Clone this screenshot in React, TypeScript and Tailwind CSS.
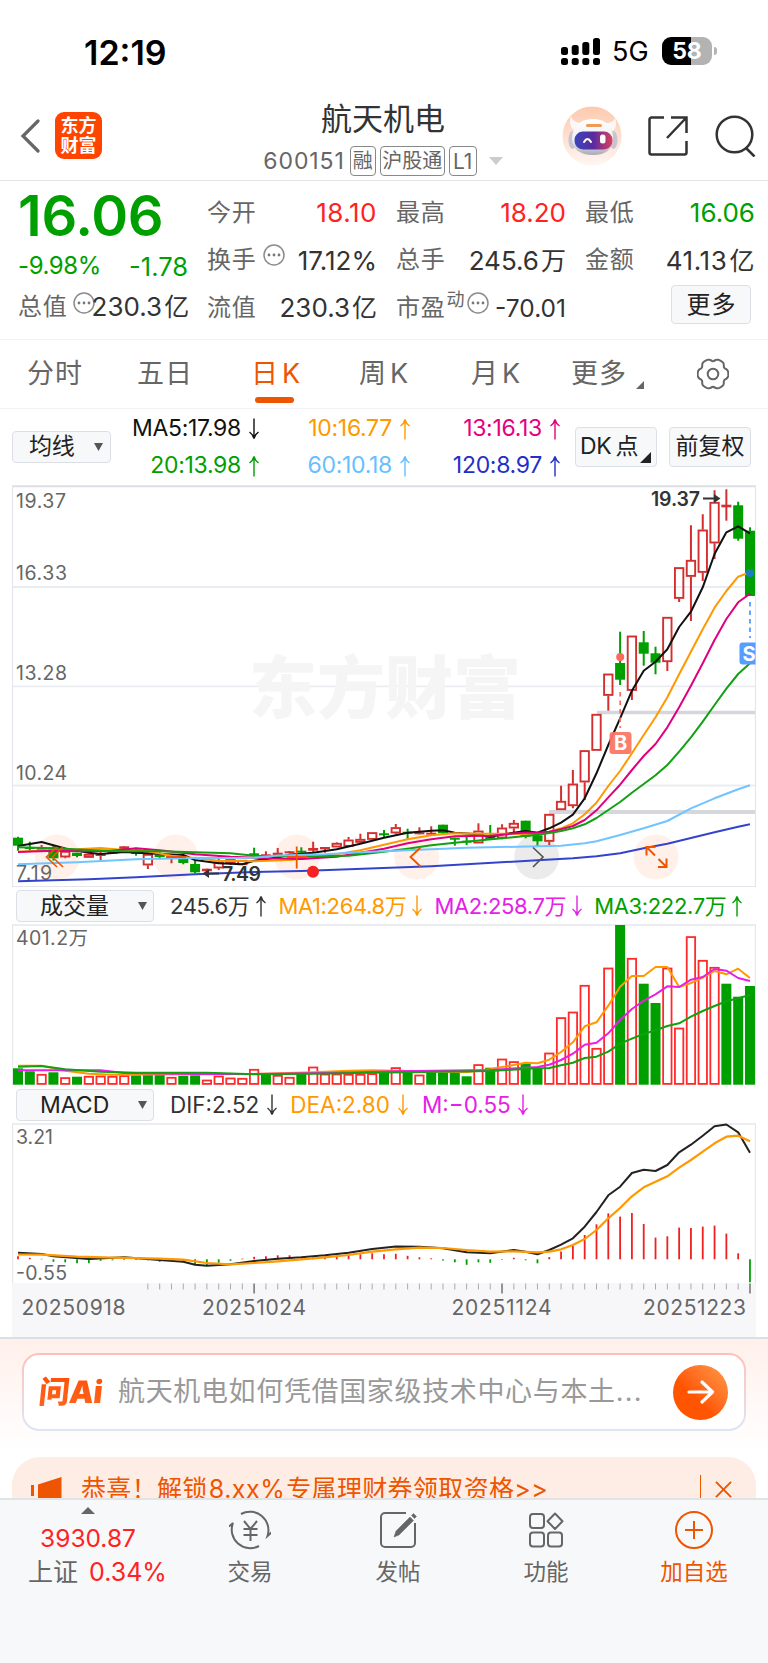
import type { ReactNode } from "react";
import { clsx } from "clsx";

/* ------------------------------------------------------------------ */
/* Chart data: pixel rows inside the 744px wide chart canvas           */
/* ------------------------------------------------------------------ */

type Color = "r" | "g";
type Candle = [Color, number, number, number, number];
type Point = [number, number];

const RED = "#d32f2f";
const GREEN = "#009f00";

const xAt = (i: number) => 18 + i * 11.806;

// [colour, high, body top, body bottom, low]
const CANDLES: Candle[] = [
    ["g", 836.7, 837.7, 845.7, 850.7],
    ["g", 841.7, 847, 849, 850.7],
    ["r", 845, 847.7, 849.3, 849.3],
    ["g", 846, 847.3, 858.3, 860.7],
    ["r", 850.7, 851, 857.3, 858.3],
    ["g", 852.7, 852.7, 856, 857.3],
    ["r", 854, 854, 857.7, 857.7],
    ["r", 851.7, 854, 856, 860],
    ["r", 851.7, 851.7, 853.3, 853.3],
    ["r", 846.3, 846.3, 849.3, 849.3],
    ["g", 847.7, 849.3, 854, 855.7],
    ["r", 852.3, 854, 865.3, 869],
    ["g", 850, 855, 857, 859.3],
    ["r", 856, 856, 858.7, 863.3],
    ["g", 858.3, 858.7, 863, 864.3],
    ["g", 860, 864, 872.3, 873.3],
    ["r", 868.7, 868.7, 871.3, 873.3],
    ["r", 855, 861.7, 868.3, 870],
    ["r", 859.3, 859.3, 863.3, 865],
    ["r", 860, 860, 865, 865],
    ["g", 847.7, 853.3, 855.3, 855.3],
    ["r", 851.3, 854.3, 856, 856],
    ["r", 848, 852.7, 856, 856],
    ["r", 851, 851.3, 853.3, 853.3],
    ["g", 847.3, 850.7, 852.7, 852.7],
    ["r", 841.7, 848, 850.7, 853.3],
    ["r", 847, 847, 849.3, 852.7],
    ["r", 842.3, 843, 847.3, 847.3],
    ["r", 837, 839.7, 846.7, 846.7],
    ["r", 833.7, 839, 842.7, 842.7],
    ["r", 832.3, 832.3, 839.7, 839.7],
    ["g", 830, 833.3, 835, 837.7],
    ["r", 824, 827.3, 833.3, 834.3],
    ["g", 828.7, 831.7, 833.3, 838.7],
    ["r", 827.3, 832.3, 834.3, 834.3],
    ["r", 826.3, 832.7, 834.3, 835.3],
    ["g", 824.7, 824.7, 833.3, 834.3],
    ["g", 837.7, 837.7, 839.3, 845.7],
    ["g", 837, 840.7, 842.3, 845],
    ["r", 823.3, 830.7, 843.3, 843.3],
    ["g", 825, 836.3, 839, 840],
    ["r", 824.3, 827.7, 838.3, 839.3],
    ["r", 820, 823, 828.3, 832],
    ["g", 820.7, 820.7, 836.7, 838.3],
    ["g", 832.7, 835.3, 841.3, 846],
    ["r", 814, 814, 841.7, 845],
    ["r", 785.7, 801, 810, 810],
    ["r", 770, 783.7, 806, 808.3],
    ["r", 750.3, 750.3, 782.3, 800],
    ["r", 714, 714, 750.7, 750.7],
    ["r", 673.7, 673.7, 695.7, 710.7],
    ["g", 631.7, 663, 679.7, 685],
    ["r", 635.7, 635.7, 690.7, 700],
    ["g", 631, 642.3, 653.7, 665.7],
    ["g", 646.7, 653.3, 662.7, 674.3],
    ["r", 617, 617, 662, 671],
    ["r", 567.3, 567.3, 598.7, 602],
    ["r", 525.3, 560, 576.7, 621],
    ["r", 514.3, 529.7, 572.7, 581],
    ["r", 490.3, 502, 543.3, 559],
    ["r", 489.3, 504.7, 507.3, 520.7],
    ["g", 501.7, 505.3, 538.7, 540.7],
    ["g", 527.3, 530.7, 596, 596],
];

const MA5: Point[] = [[0, 846], [2, 842], [4, 848.5], [6, 852.7], [7, 854], [9, 852], [12, 854], [14, 855], [15, 860], [17, 863.3], [19, 864.3], [20, 860.7], [22, 857.5], [23, 854.7], [25, 852.7], [27, 849.3], [29, 843.7], [31, 837.7], [33, 832.7], [35, 830.7], [36, 830.3], [37, 832.7], [39, 834.3], [40, 836.7], [41, 834.5], [43, 831], [44, 832.7], [45, 828.3], [46, 822.7], [47, 814.7], [48, 798.3], [49, 773.3], [50, 745], [51, 718.3], [52, 690.7], [53, 670.7], [54, 661.7], [55, 649.3], [56, 627], [57, 611.7], [58, 587.3], [59, 554], [60, 532.3], [61, 526.3], [62, 533.3]];
const MA10: Point[] = [[0, 851.7], [3, 850], [5, 849.3], [7, 848], [9, 850], [11, 851.3], [13, 855.7], [15, 858.3], [17, 860.7], [20, 861.3], [23, 860], [25, 857.7], [27, 854.3], [29, 850.3], [31, 844.7], [33, 839.3], [35, 835.3], [37, 833.3], [39, 833.7], [44, 834], [45, 831.7], [46, 828.3], [47, 823.3], [48, 814.3], [49, 802.7], [50, 786], [51, 771], [52, 753.3], [53, 735], [54, 717.3], [55, 697.3], [56, 674.3], [57, 651.7], [58, 629.3], [59, 607.7], [60, 591], [61, 576.7], [62, 572.3]];
const MA13: Point[] = [[0, 852], [3, 850.7], [6, 851.3], [8, 850.7], [10, 848.3], [12, 850.3], [15, 854.3], [18, 856.7], [21, 858.3], [24, 859], [27, 856.7], [29, 852.7], [31, 848.7], [33, 843.3], [35, 839.3], [37, 836.3], [40, 835.7], [43, 832.5], [44, 832.7], [45, 831.7], [46, 829.3], [47, 826], [48, 820], [49, 810.3], [50, 797.3], [51, 784.7], [52, 770], [53, 756], [54, 744], [55, 727.3], [56, 707.3], [57, 685.7], [58, 663.3], [59, 640], [60, 619], [61, 602.3], [62, 593.7]];
const MA20: Point[] = [[0, 847.3], [3, 848.3], [6, 850], [9, 851.3], [12, 851.3], [15, 852.3], [18, 853.3], [20, 855.7], [23, 856.2], [25, 856.3], [28, 855.7], [31, 851.7], [33, 848.7], [35, 845.3], [37, 842.7], [39, 840.5], [41, 838.3], [44, 834.7], [45, 833], [46, 831], [47, 828.3], [48, 824.3], [49, 818], [50, 810], [51, 802], [52, 792.7], [53, 784], [54, 775.3], [55, 765], [56, 751.7], [57, 737.3], [58, 721.7], [59, 705], [60, 688.7], [61, 674], [62, 663.3]];
const MA60: Point[] = [[0, 864.3], [5, 862.3], [10, 859.3], [15, 858], [20, 857.7], [22, 855.5], [26, 854.3], [29, 852.3], [32, 850.7], [38, 847.7], [44, 846.3], [46, 845.7], [48, 843.3], [49, 841.3], [51, 835], [53, 828.3], [55, 821], [57, 808.3], [59, 798.3], [61, 789.3], [62, 785.3]];
const MA120: Point[] = [[0, 881.3], [6, 879.3], [10, 877.3], [15, 874.3], [20, 872], [24, 871], [35, 866.3], [44, 860.3], [47, 858.3], [49, 856.3], [51, 853.3], [53, 848.3], [55, 843.7], [57, 838], [59, 832.3], [61, 826.7], [62, 824.3]];

const VOLUMES: [Color, number][] = [
    ["g", 1068.3], ["g", 1071.3], ["r", 1074], ["g", 1072.3], ["r", 1077.3], ["g", 1076.7], ["r", 1076],
    ["r", 1075.7], ["r", 1076], ["r", 1075.3], ["g", 1075.3], ["g", 1074.7], ["g", 1074.3], ["r", 1077],
    ["g", 1075.7], ["g", 1075.3], ["r", 1079.7], ["r", 1075.7], ["r", 1077.7], ["r", 1078], ["r", 1069],
    ["g", 1074.3], ["r", 1075], ["r", 1077], ["g", 1074], ["r", 1066.7], ["r", 1073.7], ["r", 1073.7],
    ["r", 1074], ["r", 1074], ["r", 1073.3], ["g", 1073], ["r", 1067.3], ["g", 1073], ["r", 1074.7],
    ["g", 1072.3], ["g", 1072.7], ["g", 1072.7], ["g", 1076.3], ["r", 1064.3], ["g", 1067.7], ["r", 1058.7],
    ["r", 1061.3], ["g", 1063.7], ["g", 1068.3], ["r", 1052.7], ["r", 1017.3], ["r", 1011.7], ["r", 985],
    ["r", 1048], ["r", 967.7], ["g", 925], ["r", 958], ["g", 983.7], ["g", 1003], ["r", 967.7],
    ["r", 1027.7], ["r", 936.3], ["r", 960], ["r", 967], ["g", 983.7], ["g", 996.7], ["g", 986],
];

const VMA1: Point[] = [[0, 1065.7], [2, 1065.7], [4, 1070.7], [6, 1073.7], [8, 1074.7], [14, 1074.3], [20, 1074], [25, 1072.3], [28, 1070.7], [30, 1070.3], [33, 1071], [38, 1072.3], [40, 1069.3], [41, 1067], [42, 1065], [43, 1062.7], [44, 1063.3], [45, 1059.7], [46, 1052], [47, 1042.3], [48, 1026.3], [49, 1022.3], [50, 1005.7], [51, 986.7], [52, 976], [53, 976], [54, 967], [55, 967], [56, 987], [57, 983], [58, 977.7], [59, 971], [60, 974.3], [61, 968.7], [62, 978]];
const VMA2: Point[] = [[0, 1070.3], [7, 1070.3], [9, 1073], [15, 1074], [20, 1074], [26, 1073], [32, 1071.3], [40, 1070], [43, 1067.7], [44, 1067], [45, 1064.7], [46, 1060], [47, 1053.7], [48, 1044.7], [49, 1042.7], [50, 1033.3], [51, 1020], [52, 1009], [53, 1000.7], [54, 994.3], [55, 986.3], [56, 987], [57, 979.7], [58, 977], [59, 969], [60, 970.7], [61, 978], [62, 981]];
const VMA3: Point[] = [[0, 1066.7], [2, 1066], [4, 1069.3], [7, 1071.7], [10, 1072.7], [16, 1072.7], [20, 1074.3], [25, 1073.7], [30, 1072.7], [40, 1071], [44, 1068.3], [45, 1068], [46, 1065.3], [47, 1062.7], [48, 1058], [49, 1056.7], [50, 1051.7], [51, 1043.7], [52, 1038.7], [53, 1034], [54, 1030.3], [55, 1026], [56, 1023.3], [57, 1016.7], [58, 1011], [59, 1006], [60, 1001.3], [61, 998.3], [62, 995]];

// MACD bar ends, measured from the zero line (positive is up)
const BARS = [3, 1.5, 0.5, -2.5, -3, -4, -4, -1.5, -1, -0.8, -0.8, -1, -2.5, -2, -3, -5, -6.5, -3.5, -1.5, 0.7, 2.5, 3, 4, 4, 2.5, 3, 3, 3.5, 4, 5, 6, 5, 5.5, 3.5, 2, 1, -1.2, -3, -5.5, -3, -3.5, -0.5, 1.5, -1, -4, 2.3, 7.7, 13.3, 24.3, 35, 46, 42.7, 46.3, 35.3, 21.7, 23, 31.7, 31.3, 32.7, 33.7, 25.7, 6, -23];

const DIF: Point[] = [[0, 1252.7], [2, 1254], [3, 1256.3], [6, 1259], [9, 1257.3], [12, 1260], [14, 1261.7], [15, 1264.7], [16, 1265.7], [18, 1264.3], [20, 1261], [22, 1258.7], [24, 1257.3], [26, 1255.3], [28, 1252.7], [30, 1249], [32, 1246.5], [34, 1246.7], [36, 1248.3], [38, 1252.3], [40, 1253.3], [42, 1250], [43, 1251.7], [44, 1254.3], [45, 1250], [46, 1244.7], [47, 1238.3], [48, 1226.7], [49, 1212], [50, 1195.3], [51, 1186.7], [52, 1173], [53, 1169.7], [54, 1171], [55, 1165], [56, 1152.3], [57, 1144.7], [58, 1135.7], [59, 1126.3], [60, 1124.5], [61, 1132.3], [62, 1152.7]];
const DEA: Point[] = [[0, 1254.5], [2, 1254.7], [5, 1256.7], [8, 1257.7], [12, 1258.7], [14, 1259.7], [16, 1263], [18, 1264.3], [20, 1263], [22, 1261.3], [24, 1259.3], [26, 1257.3], [28, 1255], [30, 1251.7], [32, 1249.3], [34, 1247.7], [36, 1248], [38, 1250], [40, 1251.7], [42, 1251.3], [44, 1252.3], [45, 1251.7], [46, 1249.3], [47, 1245], [48, 1239], [49, 1230], [50, 1218.3], [51, 1208], [52, 1196.3], [53, 1187.3], [54, 1181.7], [55, 1176.3], [56, 1167.7], [57, 1160], [58, 1151.7], [59, 1143.3], [60, 1136.7], [61, 1135.7], [62, 1141.3]];

/* ------------------------------------------------------------------ */
/* Small pieces                                                        */
/* ------------------------------------------------------------------ */

function Line({ points, color, width = 2 }: { points: Point[]; color: string; width?: number }) {
    return (
        <polyline
            points={points.map(([i, y]) => `${xAt(i)},${y}`).join(" ")}
            fill="none"
            stroke={color}
            strokeWidth={width}
            strokeLinejoin="round"
        />
    );
}

function AxisText({ x, y, w, children }: { x: number; y: number; w: number; children: string }) {
    return (
        <text x={x} y={y} textLength={w} fontSize="19.5" fill="#666">
            {children}
        </text>
    );
}

function Arrow({ down }: { down?: boolean }) {
    return (
        <svg
            viewBox="0 0 12 22"
            className={clsx("h-[22px] w-3 shrink-0", down && "rotate-180")}
            fill="none"
            stroke="currentColor"
            strokeWidth="1.4"
        >
            <path d="M6 21.5V1.5M1.5 8Q5 5.500 6 1.500Q7 5.500 10.500 8" />
        </svg>
    );
}

function Ma({ color, down, children, className }: { color: string; down?: boolean; children: ReactNode; className?: string }) {
    return (
        <div className={clsx("flex items-center", color, className)}>
            <span className="whitespace-nowrap">{children}</span>
            <Arrow down={down} />
        </div>
    );
}

function Dots() {
    return (
        <svg viewBox="0 0 22 22" className="size-[22px] shrink-0" fill="none" stroke="#8c8c8c" strokeWidth="1.5">
            <circle cx="11" cy="11" r="10" />
            <g fill="#777" stroke="none">
                <circle cx="6" cy="11" r="1.400" />
                <circle cx="11" cy="11" r="1.400" />
                <circle cx="16" cy="11" r="1.400" />
            </g>
        </svg>
    );
}

function Select({ children, className }: { children: ReactNode; className: string }) {
    return (
        <div className={clsx("flex items-center justify-between rounded-[4px] border border-[#dcdfe6] bg-[#f7f8fa] text-[#222]", className)}>
            <span className="whitespace-nowrap">{children}</span>
            <svg viewBox="0 0 9 8" className="h-2 w-[9px]" fill="#555">
                <path d="M0 0h9L4.500 8z" />
            </svg>
        </div>
    );
}

function Cell({
    label,
    value,
    unit,
    extra,
    color = "text-[#333]",
    size = "text-[26px]",
}: {
    label: string;
    value?: string;
    unit?: string;
    extra?: ReactNode;
    color?: string;
    size?: string;
}) {
    return (
        <div className="flex h-[47.500px] items-center justify-between">
            <div className="flex items-center text-[24px] tracking-[0.800px] whitespace-nowrap text-[#666]">
                {label}
                {extra}
            </div>
            <span className={clsx("whitespace-nowrap", color, size)}>
                {value}
                {unit && <span className="ml-[2px] text-[25px]">{unit}</span>}
            </span>
        </div>
    );
}

// six broad lobes with narrow notches between them
const gearPath =
    Array.from({ length: 96 }, (_, k) => {
        const a = (k * Math.PI) / 48;
        const r = 15.300 - 2.500 * Math.pow((1 - Math.cos(6 * a)) / 2, 2.500);
        return `${k ? "L" : "M"}${(16 + r * Math.cos(a)).toFixed(2)} ${(16 + r * Math.sin(a)).toFixed(2)}`;
    }).join("") + "Z";

/* ------------------------------------------------------------------ */
/* Top                                                                 */
/* ------------------------------------------------------------------ */

function StatusBar() {
    return (
        <div className="flex h-[102px] items-center justify-between pr-[51px] pl-[84px] text-black">
            <span className="pt-[2px] text-[34px] font-semibold">12:19</span>
            <div className="flex items-center">
                <svg viewBox="0 0 39 27" className="h-[27px] w-[39px]">
                    <rect x="0" y="9" width="7" height="8" rx="2.500" />
                    <rect x="10.700" y="7" width="7" height="10" rx="2.500" />
                    <rect x="21.300" y="4" width="7" height="13" rx="2.500" />
                    <rect x="32" y="0" width="7" height="17" rx="2.500" />
                    <rect x="0" y="20" width="7" height="7" rx="2.500" />
                    <rect x="10.700" y="20" width="7" height="7" rx="2.500" />
                    <rect x="21.300" y="20" width="7" height="7" rx="2.500" />
                    <rect x="32" y="20" width="7" height="7" rx="2.500" />
                </svg>
                <span className="ml-3 w-[38px] pt-[2px] text-[27px]">5G</span>
                <div className="ml-3 flex h-7 w-[50px] items-center justify-center rounded-[9px] bg-linear-to-r from-black from-58% to-[#b3b3b3] to-58% text-[23px] font-bold text-white">
                    58
                </div>
                <div className="ml-0.5 h-2 w-[3px] rounded-r-full bg-[#b3b3b3]" />
            </div>
        </div>
    );
}

function Robot() {
    return (
        <svg viewBox="0 0 60 60" className="size-[60px]">
            <defs>
                <linearGradient id="robotBg" x1="0" y1="0" x2="0" y2="1">
                    <stop offset="0" stopColor="#fdc9ae" />
                    <stop offset="1" stopColor="#fff6f1" />
                </linearGradient>
                <linearGradient id="visor" x1="0" y1="0" x2="1" y2="0">
                    <stop offset="0" stopColor="#3b45b8" />
                    <stop offset="0.500" stopColor="#5a2aa0" />
                    <stop offset="1" stopColor="#e0405c" />
                </linearGradient>
                <linearGradient id="shell" x1="0" y1="0" x2="0" y2="1">
                    <stop offset="0" stopColor="#ffffff" />
                    <stop offset="0.600" stopColor="#efedf2" />
                    <stop offset="1" stopColor="#a9a9b8" />
                </linearGradient>
            </defs>
            <circle cx="30" cy="30" r="29.500" fill="url(#robotBg)" />
            <path d="M9 10c-2 6-1 11 3 14l7-7c-5 0-9-3-10-7zM53 12c2 5 1 10-2 13l-7-8c5 0 8-2 9-5z" fill="#fbf8f8" />
            <ellipse cx="10.500" cy="34" rx="4" ry="9" fill="#c6c4d0" />
            <ellipse cx="51.500" cy="34" rx="4" ry="9" fill="#c6c4d0" />
            <path d="M31 13c14 0 20 9 20 19 0 11-7 17-20 17S10 43 10 32c0-10 7-19 21-19z" fill="url(#shell)" />
            <rect x="24" y="18" width="16" height="3" rx="1.500" fill="#ef9a55" />
            <rect x="12.500" y="25.500" width="38" height="18" rx="8.500" fill="url(#visor)" />
            <path d="M22 36q3.500-6 7 0" fill="none" stroke="#fff" strokeWidth="2" strokeLinecap="round" />
            <rect x="38" y="28.500" width="5.500" height="9" rx="2.500" fill="#fff" />
        </svg>
    );
}

function Header() {
    return (
        <header className="grid h-[79px] grid-cols-[1fr_auto_1fr] items-start border-b border-[#e4e4e6]">
            <div className="flex items-center pt-[10px] pl-5">
                <svg viewBox="0 0 20 34" className="h-[34px] w-5" fill="none" stroke="#666" strokeWidth="3.200" strokeLinecap="round">
                    <path d="M18 2L3 17l15 15" />
                </svg>
                <div className="ml-[15px] flex size-[47px] flex-col items-center justify-center rounded-[9px] bg-[#ff4400] text-[18px] leading-[20px] font-bold text-white">
                    <span>东方</span>
                    <span>财富</span>
                </div>
            </div>
            <div className="-ml-[2px] flex flex-col items-center">
                <h1 className="mt-[-1px] h-9 text-[31px] leading-9 text-[#333]">航天机电</h1>
                <div className="mt-[9px] flex h-[30px] items-center text-[22px] leading-none text-[#666]">
                    <span className="mr-[5px] text-[23px] tracking-[0.900px]">600151</span>
                    <span className="mr-1 flex h-[30px] w-[26px] items-center justify-center rounded-[4px] border border-[#888] text-[20px]">融</span>
                    <span className="mr-1 flex h-[30px] w-[65px] items-center justify-center rounded-[4px] border border-[#888] text-[20px]">沪股通</span>
                    <span className="flex h-[30px] w-7 items-center justify-center rounded-[4px] border border-[#888] text-[21px]">L1</span>
                    <svg viewBox="0 0 14 8" className="ml-[12px] h-2 w-3.5" fill="#ccc">
                        <path d="M0 0h14L7 8z" />
                    </svg>
                </div>
            </div>
            <div className="flex items-center justify-end pt-[4px] pr-[11px]">
                <Robot />
                <svg viewBox="0 0 40 40" className="ml-[26px] size-10" fill="none" stroke="#333" strokeWidth="2.500">
                    <path d="M16 1.500H3.500a2 2 0 0 0-2 2v33a2 2 0 0 0 2 2h33a2 2 0 0 0 2-2V25M23 1.500h15.500V17M38.500 1.500L19 22" />
                </svg>
                <svg viewBox="0 0 42 42" className="ml-[27px] size-[42px]" fill="none" stroke="#333" strokeWidth="2.500">
                    <circle cx="19.500" cy="19.500" r="17.800" />
                    <path d="M31 33l8.500 8.500" />
                </svg>
            </div>
        </header>
    );
}

function Quote() {
    return (
        <section className="grid h-[159px] grid-cols-4 gap-x-[19px] border-b border-[#f2f2f4] pt-[8px] pr-[13px] pl-[18px]">
            <div className="flex flex-col text-[#009f00]">
                <div className="mt-[2px] h-[50px] text-[56px] leading-[50px] font-semibold tracking-[-0.300px]">16.06</div>
                <div className="mt-[5px] flex h-[40px] items-center justify-between text-[24px]">
                    <span className="tracking-[-0.400px]">-9.98%</span>
                    <span className="pt-[2px] text-[25.500px]">-1.78</span>
                </div>
                <div className="flex h-[41px] items-center text-[24px] whitespace-nowrap text-[#666]">
                    <span className="tracking-[0.800px]">总值</span>
                    <span className="-mt-[8px] ml-[5px]">
                        <Dots />
                    </span>
                    <span className="-ml-[3px] text-[26px] text-[#333]">
                        230.3<span className="ml-[2px] text-[25px]">亿</span>
                    </span>
                </div>
            </div>
            <div>
                <Cell label="今开" value="18.10" color="text-[#ff2222] tracking-[0.500px]" />
                <Cell label="换手" value="17.12%" extra={<span className="-mt-[10px] ml-[6px]"><Dots /></span>} />
                <Cell label="流值" value="230.3" unit="亿" />
            </div>
            <div>
                <Cell label="最高" value="18.20" color="text-[#ff2222]" />
                <Cell label="总手" value="245.6" unit="万" />
                <Cell
                    label="市盈"
                    value="-70.01"
                    size="text-[24.500px] pt-[2px]"
                    extra={
                        <span className="-mt-[10px] flex items-center gap-[2px]">
                            <span className="-mt-[6px] ml-px text-[18px] tracking-normal">动</span>
                            <Dots />
                        </span>
                    }
                />
            </div>
            <div>
                <Cell label="最低" value="16.06" color="text-[#009f00]" />
                <Cell label="金额" value="41.13" unit="亿" color="text-[#333] tracking-[0.600px]" />
                <div className="mt-[1px] mr-[4px] ml-auto flex h-[39px] w-20 items-center justify-center rounded-[4px] border border-[#dcdfe6] bg-[#f7f8fa] pl-px text-[24px] tracking-[1px] text-[#222]">
                    更多
                </div>
            </div>
        </section>
    );
}

function Tabs() {
    const tab = "flex h-full items-center pt-px text-[27px] tracking-[1px] text-[#666] whitespace-nowrap";
    return (
        <nav className="flex h-[69px] items-center border-b border-[#f2f2f4] pl-[27px]">
            <div className={clsx(tab, "w-[110px]")}>分时</div>
            <div className={clsx(tab, "w-[114px]")}>五日</div>
            <div className="relative flex h-full w-[108px] items-center pt-px text-[27px] tracking-[1px] text-[#ee5500]">
                日<span className="ml-[3px]">K</span>
                <div className="absolute bottom-[5px] left-[4px] h-[6px] w-[39px] rounded-full bg-[#ee5500]" />
            </div>
            <div className={clsx(tab, "w-[112px]")}>
                周<span className="ml-[3px]">K</span>
            </div>
            <div className={clsx(tab, "w-[100px]")}>
                月<span className="ml-[3px]">K</span>
            </div>
            <div className={clsx(tab, "w-[126px]")}>
                更多
                <svg viewBox="0 0 8 8" className="mt-[20px] ml-[9px] size-2" fill="#666">
                    <path d="M8 0v8H0z" />
                </svg>
            </div>
            <svg viewBox="0 0 32 32" className="size-8" fill="none" stroke="#666" strokeWidth="2">
                <path d={gearPath} />
                <circle cx="16" cy="16" r="5.300" />
            </svg>
        </nav>
    );
}

function Averages() {
    return (
        <div className="flex h-[77px] items-center pl-3 text-[23px] tracking-[-0.300px]">
            <Select className="h-8 w-[99px] pr-[7px] pl-[16px] text-[23px]">均线</Select>
            <div className="grid w-[450px] grid-cols-[149px_151px_150px] gap-y-[3px] pt-px">
                <Ma color="text-[#111]" className="h-[34px] justify-end gap-[7px]" down>MA5:17.98</Ma>
                <Ma color="text-[#ff9900]" className="h-[34px] justify-end gap-[7px]">10:16.77</Ma>
                <Ma color="text-[#e6007e]" className="h-[34px] justify-end gap-[7px]">13:16.13</Ma>
                <Ma color="text-[#009f00]" className="h-[34px] justify-end gap-[7px]">20:13.98</Ma>
                <Ma color="text-[#66bfff]" className="h-[34px] justify-end gap-[7px]">60:10.18</Ma>
                <Ma color="text-[#2030c8]" className="h-[34px] justify-end gap-[7px]">120:8.97</Ma>
            </div>
            <div className="relative ml-[14px] flex h-10 w-[82px] items-center rounded-[4px] border border-[#dcdfe6] bg-[#f7f8fa] pl-[4px] text-[23px] text-[#222]">
                DK<span className="ml-[4px]">点</span>
                <svg viewBox="0 0 11 11" className="absolute right-[5px] bottom-[3px] size-[11px]" fill="#222">
                    <path d="M11 0v11H0z" />
                </svg>
            </div>
            <div className="ml-3 flex h-10 w-[82px] items-center justify-center rounded-[4px] border border-[#dcdfe6] bg-[#f7f8fa] text-[23px] tracking-normal text-[#222]">
                前复权
            </div>
        </div>
    );
}

/* ------------------------------------------------------------------ */
/* Charts                                                              */
/* ------------------------------------------------------------------ */

function KLine() {
    return (
        <svg viewBox="12 485 744 402" className="ml-3 block h-[402px] w-[744px]">
            <path d="M12 486.200H756" stroke="#dcdee5" strokeWidth="2" />
            <path d="M12.500 486V886.500H755.500V486" fill="none" stroke="#e3e5ea" strokeWidth="1.200" />
            <path d="M13 587H755M13 686.300H755M13 785.500H755" stroke="#e9edf2" strokeWidth="1.800" />
            <text x="249" y="713" fontSize="68" fontWeight="900" textLength="272" fill="#f5f5f5">东方财富</text>

            <g fill="#ff6a2b" fillOpacity="0.100">
                <circle cx="57.300" cy="857" r="22.500" />
                <circle cx="175.600" cy="857" r="22.500" />
                <circle cx="297" cy="857" r="22.500" />
                <circle cx="416.700" cy="857" r="22.500" />
                <circle cx="656" cy="857" r="22.500" />
            </g>
            <circle cx="536.700" cy="857" r="22.500" fill="#000" fillOpacity="0.080" />

            <path d="M597 712.600H755" stroke="#d5d7dd" strokeWidth="3.500" />
            <path d="M549 812H755" stroke="#d5d7dd" strokeWidth="4" />

            <AxisText x={16} y={508} w={50}>19.37</AxisText>
            <AxisText x={16} y={580} w={51}>16.33</AxisText>
            <AxisText x={16} y={680} w={51}>13.28</AxisText>
            <AxisText x={16} y={780} w={51}>10.24</AxisText>
            <AxisText x={16} y={879.500} w={36}>7.19</AxisText>

            {CANDLES.map(([c, high, top, bottom, low], i) => {
                const x = xAt(i);
                const color = c === "r" ? RED : GREEN;
                const h = bottom - top;
                return (
                    <g key={i}>
                        {c === "r" && h > 3.500 ? (
                            <>
                                <path d={`M${x} ${high}V${top}M${x} ${bottom}V${low}`} stroke={color} strokeWidth="2" />
                                <rect x={x - 4.200} y={top + 0.800} width="8.400" height={h - 1.600} fill="none" stroke={color} strokeWidth="1.900" />
                            </>
                        ) : (
                            <>
                                <path d={`M${x} ${high}V${low}`} stroke={color} strokeWidth="2" />
                                <rect x={x - 5} y={top} width="10" height={Math.max(h, 2)} fill={color} />
                            </>
                        )}
                    </g>
                );
            })}

            <Line points={MA5} color="#111" />
            <Line points={MA10} color="#ff9900" />
            <Line points={MA13} color="#e0007f" />
            <Line points={MA20} color="#12a012" />
            <Line points={MA60} color="#70c4ff" width={2} />
            <Line points={MA120} color="#3344cc" />

            {/* zoom and pan controls over the plot */}
            <path d="M57 847l-10.500 10L57 867M63 847l-10.500 10L63 867" fill="none" stroke="#ee5500" strokeWidth="1.700" />
            <path d="M166 857h20M287 857h20M296.700 846.500v22" stroke="#ee5500" strokeWidth="1.800" />
            <path d="M420.500 847.500L410.500 857l10 9.500" fill="none" stroke="#ee5500" strokeWidth="1.900" />
            <path d="M533 847.500l10 9.500-10 10" fill="none" stroke="#555" strokeWidth="1.700" />
            <path d="M646.500 855.500v-8.500h9M646.500 847l8.500 8.500M658.500 859l8 8M666.500 858.500v8.500h-8.500" fill="none" stroke="#ee5500" strokeWidth="2" />

            <circle cx="313" cy="871.700" r="6" fill="#f52222" />
            <circle cx="620.200" cy="657" r="4" fill="#fb6a5a" />
            <path d="M620.200 692V728" stroke="#fb6a5a" strokeWidth="1.700" strokeDasharray="4.500 4" />
            <rect x="609.500" y="732" width="22" height="22" rx="3" fill="#fb7765" fillOpacity="0.950" />
            <text x="620.500" y="750" fontSize="20" fontWeight="700" fill="#fff" textAnchor="middle">B</text>
            <circle cx="750" cy="573" r="4" fill="#1a7fc0" />
            <path d="M750 602V638" stroke="#4b94ff" strokeWidth="1.700" strokeDasharray="4.500 4" />
            <path d="M742.500 642.500H755.500V664.500H742.500a3 3 0 0 1-3-3V645.500a3 3 0 0 1 3-3z" fill="#579cff" />
            <text x="742.500" y="660.500" fontSize="20" fontWeight="700" fill="#fff">S</text>

            <text x="651" y="505.500" fontSize="19.500" fontWeight="600" textLength="49" fill="#333">19.37</text>
            <path d="M703 498.500h13" stroke="#333" strokeWidth="2" />
            <path d="M714 494l6.500 4.500-6.500 4.500z" fill="#333" />
            <text x="222" y="881" fontSize="19.500" fontWeight="600" textLength="39" fill="#333">7.49</text>
            <path d="M206 873.500h13" stroke="#333" strokeWidth="2" />
            <path d="M209 869l-6.500 4.500 6.500 4.500z" fill="#333" />
        </svg>
    );
}

function Volume() {
    return (
        <svg viewBox="12 924 744 162" className="ml-3 block h-[162px] w-[744px]">
            <path d="M12.500 1085V925H755.500V1085" fill="none" stroke="#e6e8ec" strokeWidth="1.400" />
            <AxisText x={16} y={945} w={72}>401.2万</AxisText>
            {VOLUMES.map(([c, top], i) =>
                c === "g" ? (
                    <rect key={i} x={xAt(i) - 5} y={top} width="10" height={1084.700 - top} fill={GREEN} />
                ) : (
                    <rect key={i} x={xAt(i) - 4.200} y={top + 0.800} width="8.400" height={1083.100 - top} fill="none" stroke="#ff2a2a" strokeWidth="1.800" />
                ),
            )}
            <Line points={VMA1} color="#ff9900" />
            <Line points={VMA2} color="#e620e6" />
            <Line points={VMA3} color="#12a012" />
        </svg>
    );
}

function Macd() {
    return (
        <svg viewBox="12 1123 744 214" className="ml-3 block h-[214px] w-[744px]">
            <rect x="12" y="1283" width="744" height="54" fill="#f7f7fa" />
            <path d="M12.500 1283V1124H755.500V1283" fill="none" stroke="#e6e8ec" strokeWidth="1.400" />
            <AxisText x={16} y={1143.500} w={37}>3.21</AxisText>
            <AxisText x={16} y={1279.500} w={51}>-0.55</AxisText>
            {BARS.map((v, i) => (
                <path key={i} d={`M${xAt(i)} 1259.300v${-v}`} stroke={v > 0 ? "#f02020" : GREEN} strokeWidth="1.800" />
            ))}
            <Line points={DIF} color="#222" />
            <Line points={DEA} color="#ff9900" width={2.200} />
            {Array.from({ length: 52 }, (_, k) => k + 11).map((i) => {
                const major = i === 20 || i === 41 || i === 62;
                return <path key={i} d={`M${xAt(i)} 1283.500v${major ? 10 : 6}`} stroke={major ? "#888" : "#aaa"} strokeWidth={major ? 1.800 : 1} />;
            })}
            <g fontSize="21" fill="#666">
                <text x="21.500" y="1314.500" textLength="104">20250918</text>
                <text x="202" y="1314.500" textLength="104">20251024</text>
                <text x="451.500" y="1314.500" textLength="100">20251124</text>
                <text x="643" y="1314.500" textLength="103">20251223</text>
            </g>
        </svg>
    );
}

/* ------------------------------------------------------------------ */
/* Bottom                                                              */
/* ------------------------------------------------------------------ */

function AskAi() {
    return (
        <section className="h-[161px] overflow-hidden border-t-2 border-[#dcdee6] bg-linear-to-b from-[#fff0eb] to-white to-70%">
            <div className="mx-[22px] mt-[14px] h-[78px] rounded-[17px] bg-linear-to-b from-[#ffc0b5] to-[#dce5f6] p-[2px]">
                <div className="flex h-full items-center rounded-[15px] bg-white pr-[16px] pl-[15px]">
                    <span className="w-[79px] -skew-x-6 bg-linear-to-b from-[#ff4a00] to-[#ff6a20] bg-clip-text pt-px text-[31px] font-black tracking-[-0.500px] text-transparent">
                        问Ai
                    </span>
                    <span className="flex-1 pt-px text-[27px] tracking-[0.650px] whitespace-nowrap text-[#999]">
                        航天机电如何凭借国家级技术中心与本土<span className="tracking-[1.300px]">...</span>
                    </span>
                    <div className="flex size-[55px] items-center justify-center rounded-full bg-linear-to-bl from-[#ff9a45] to-[#ff5500] to-60%">
                        <svg viewBox="0 0 28 26" className="h-[26px] w-7" fill="none" stroke="#fff" strokeWidth="3.200" strokeLinecap="round" strokeLinejoin="round">
                            <path d="M2 13h23M15 3l10.500 10L15 23" />
                        </svg>
                    </div>
                </div>
            </div>
            <div className="mx-3 mt-[26px] flex h-[64px] items-center rounded-[28px] bg-[#feede4] pl-[19px] text-[25px] whitespace-nowrap text-[#ee5500]">
                <svg viewBox="0 0 32 28" className="mt-[3px] h-7 w-8" fill="#ee5500">
                    <path d="M0 8h3v11H0zM7 7.500L30.500 0v28L24 25.500V27H10v-6H7z" />
                </svg>
                <span className="ml-[18px] pt-[2px] tracking-[0.350px]">
                    恭喜！解锁<span className="mx-px tracking-[0.500px]">8.xx%</span>专属理财券领取资格&gt;&gt;
                </span>
                <div className="mr-[14px] ml-auto h-7 w-[1.500px] bg-[#ee5500]" />
                <svg viewBox="0 0 18 18" className="mr-[24px] size-[17px]" fill="none" stroke="#ee5500" strokeWidth="2">
                    <path d="M1 1l16 16M17 1L1 17" />
                </svg>
            </div>
        </section>
    );
}

function NavItem({ label, active, children }: { label: string; active?: boolean; children: ReactNode }) {
    return (
        <div className={clsx("flex w-[148px] flex-col items-center", active ? "text-[#ee5500]" : "text-[#666]")}>
            <svg viewBox="0 0 42 40" className="mt-[10px] h-10 w-[42px]" fill="none" stroke="currentColor" strokeWidth="2">
                {children}
            </svg>
            <span className="mt-[6px] text-[22.500px] leading-[32px]">{label}</span>
        </div>
    );
}

function BottomNav() {
    return (
        <nav className="flex h-[165px] border-t-2 border-[#e2e3e7] bg-[#f7f8fa]">
            <div className="flex w-[176px] flex-col items-center text-[24.500px] text-[#ff2222]">
                <svg viewBox="0 0 14 7" className="mt-[7px] h-[7px] w-3.5" fill="#666">
                    <path d="M7 0l7 7H0z" />
                </svg>
                <span className="mt-[8px] leading-[32px]">3930.87</span>
                <div className="flex w-full items-center pl-[28px] text-[25px] leading-[37px]">
                    <span className="text-[#666]">上证</span>
                    <span className="ml-[11px]">0.34%</span>
                </div>
            </div>
            <NavItem label="交易">
                <path d="M12 4a18.500 18.500 0 0 1 26.500 22l4.500-4M30 36A18.500 18.500 0 0 1 4 13l-4 3.500" />
                <path d="M15 11l6.500 8 6.500-8M21.500 19v12M14.500 19h14M14.500 25h14" />
            </NavItem>
            <NavItem label="发帖">
                <path d="M29 3H8a4 4 0 0 0-4 4v26a4 4 0 0 0 4 4h26a4 4 0 0 0 4-4V13" />
                <path d="M17 27l2-6L33 7l3.500 3.500L22 25zM34.500 5.500l2-2 3 3-2 2z" fill="currentColor" strokeWidth="0.500" />
            </NavItem>
            <NavItem label="功能">
                <rect x="5" y="4" width="14" height="14" rx="3" />
                <rect x="5" y="22.500" width="14" height="14" rx="3" />
                <rect x="23" y="22.500" width="14" height="14" rx="3" />
                <path d="M30 3.500l7.500 7.700L30 19l-7.500-7.800z" strokeLinejoin="round" />
            </NavItem>
            <NavItem label="加自选" active>
                <circle cx="21" cy="20" r="18" />
                <path d="M12 20h18M21 11v18" />
            </NavItem>
        </nav>
    );
}

export default function App() {
    return (
        <div className="h-[1663px] w-[768px] overflow-hidden bg-white font-['Inter','Noto_Sans_CJK_SC',sans-serif] font-normal">
            <StatusBar />
            <Header />
            <Quote />
            <Tabs />
            <div className="-mt-[1px]">
                <Averages />
            </div>
            <KLine />
            <div className="flex h-[37px] items-center pt-px pl-[16px] text-[22px] tracking-[-0.350px]">
                <Select className="mr-4 h-8 w-[138px] pr-[6px] pl-[23px] text-[23px] tracking-normal">成交量</Select>
                <Ma color="text-[#333]" className="mr-[11px] gap-[6px]">245.6万</Ma>
                <Ma color="text-[#ff9900]" className="mr-[11px] gap-[5px]" down>MA1:264.8万</Ma>
                <Ma color="text-[#e620e6]" className="mr-[11px] gap-[5px]" down>MA2:258.7万</Ma>
                <Ma color="text-[#009f00]" className="gap-[5px]">MA3:222.7万</Ma>
            </div>
            <Volume />
            <div className="flex h-[37px] items-center pt-px pl-[16px] text-[22.500px]">
                <Select className="mr-4 h-8 w-[138px] pr-[6px] pl-[23px] text-[23px]">MACD</Select>
                <Ma color="text-[#333]" className="mr-[12px] gap-[7px]" down>DIF:2.52</Ma>
                <Ma color="text-[#ff9900]" className="mr-[13px] gap-[7px]" down>DEA:2.80</Ma>
                <Ma color="text-[#e620e6]" className="gap-[6px]" down>M:−0.55</Ma>
            </div>
            <Macd />
            <AskAi />
            <BottomNav />
        </div>
    );
}
